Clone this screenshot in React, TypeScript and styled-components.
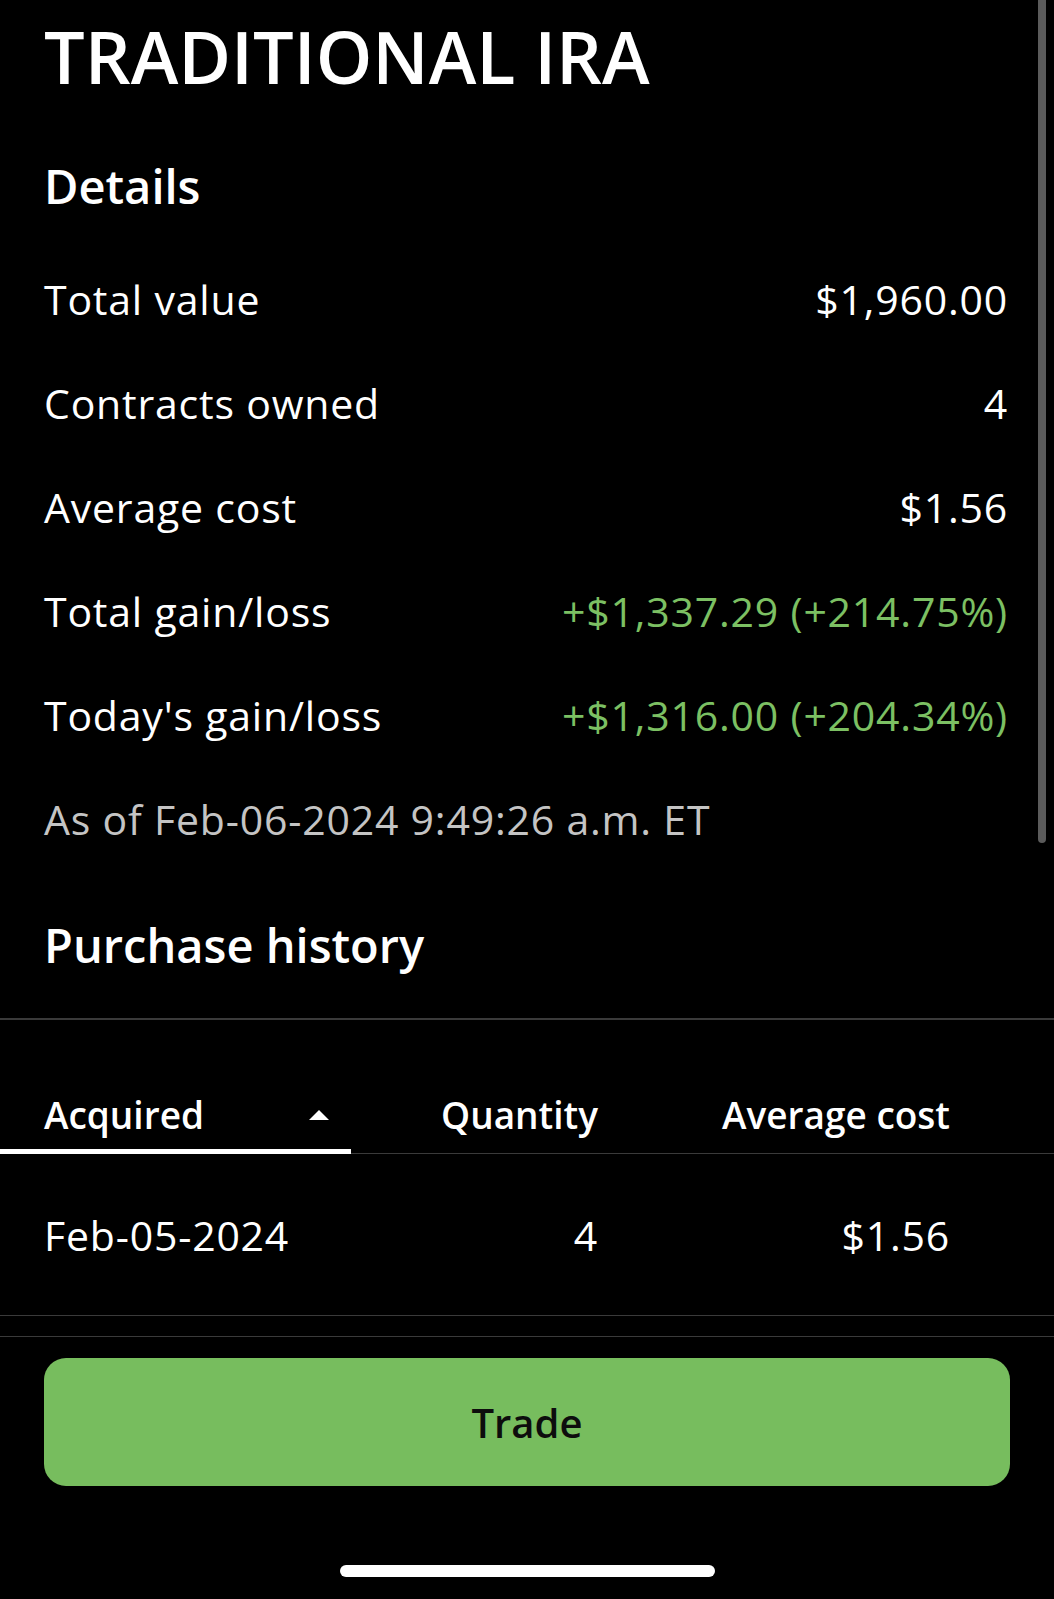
import React from 'react';
import styled, { createGlobalStyle } from 'styled-components';

const GlobalStyle = createGlobalStyle`
  html, body {
    margin: 0;
    padding: 0;
    background: #000;
  }
  body {
    font-family: "Open Sans", "Noto Sans", Arial, sans-serif;
    color: #fff;
    -webkit-font-smoothing: antialiased;
  }
`;

const Screen = styled.div`
  position: relative;
  width: 1054px;
  height: 1599px;
  background: #000;
  overflow: hidden;
  display: flex;
  flex-direction: column;
`;

const Scrollbar = styled.div`
  position: absolute;
  top: 0;
  right: 8px;
  width: 8px;
  height: 843px;
  border-radius: 0 0 4px 4px;
  background: #5b5b5b;
`;

const Title = styled.h1`
  margin: 0;
  height: 112px;
  padding: 0 44px;
  display: flex;
  align-items: center;
  font-size: 72px;
  font-weight: 600;
`;

const SectionHeading = styled.h2<{ $height: number; $top?: number; $divider?: boolean }>`
  margin: 0;
  box-sizing: border-box;
  height: ${p => p.$height}px;
  padding: ${p => p.$top ?? 0}px 44px 0;
  display: flex;
  align-items: center;
  font-size: 47px;
  font-weight: 600;
  border-bottom: ${p => (p.$divider ? '2px solid #3a3a3a' : 'none')};
`;

const DetailRow = styled.div`
  height: 104px;
  padding: 0 46px 0 44px;
  display: flex;
  align-items: center;
  justify-content: space-between;
  font-size: 41px;
  letter-spacing: 0.8px;
`;

const Value = styled.span<{ $gain?: boolean }>`
  color: ${p => (p.$gain ? '#7cc063' : '#fff')};
`;

const Timestamp = styled.div`
  height: 104px;
  padding: 0 44px;
  display: flex;
  align-items: center;
  font-size: 41px;
  letter-spacing: 0.8px;
  color: #c4c4c4;
`;

const TableRow = styled.div<{ $height: number }>`
  display: grid;
  grid-template-columns: 351px 247px 352px 1fr;
  height: ${p => p.$height}px;
  border-bottom: 1px solid #3a3a3a;
  box-sizing: border-box;
`;

const HeadCell = styled.div<{ $active?: boolean }>`
  box-sizing: border-box;
  display: flex;
  align-items: flex-end;
  justify-content: ${p => (p.$active ? 'space-between' : 'flex-end')};
  padding: 0 ${p => (p.$active ? '22px' : '0')} ${p => (p.$active ? '14px' : '18px')}
    ${p => (p.$active ? '44px' : '0')};
  font-size: 37px;
  font-weight: 600;
  line-height: 40px;
  border-bottom: ${p => (p.$active ? '5px solid #fff' : 'none')};
  margin-bottom: ${p => (p.$active ? '-1px' : '0')};
`;

const SortArrow = styled.svg`
  width: 20px;
  height: 10px;
  margin-bottom: 15px;
`;

const Cell = styled.div<{ $first?: boolean }>`
  display: flex;
  align-items: center;
  justify-content: ${p => (p.$first ? 'flex-start' : 'flex-end')};
  padding-left: ${p => (p.$first ? '44px' : '0')};
  font-size: 41px;
  letter-spacing: 0.8px;
`;

const Footer = styled.div`
  margin-top: 20px;
  border-top: 1px solid #3a3a3a;
  padding: 21px 44px 0;
  display: flex;
  flex-direction: column;
  align-items: center;
`;

const TradeButton = styled.button`
  width: 100%;
  height: 128px;
  border: none;
  border-radius: 22px;
  background: #77bd5e;
  color: #0d0d0d;
  font-family: inherit;
  font-size: 40px;
  font-weight: 600;
  cursor: pointer;
`;

const HomeIndicator = styled.div`
  margin-top: 79px;
  width: 375px;
  height: 12px;
  border-radius: 6px;
  background: #fff;
`;

const details = [
  { label: 'Total value', value: '$1,960.00' },
  { label: 'Contracts owned', value: '4' },
  { label: 'Average cost', value: '$1.56' },
  { label: 'Total gain/loss', value: '+$1,337.29 (+214.75%)', gain: true },
  { label: "Today's gain/loss", value: '+$1,316.00 (+204.34%)', gain: true },
];

export default function App() {
  return (
    <>
      <GlobalStyle />
      <Screen>
        <Scrollbar />
        <Title>TRADITIONAL IRA</Title>
        <SectionHeading $height={135} $top={13}>Details</SectionHeading>
        {details.map(d => (
          <DetailRow key={d.label}>
            <span>{d.label}</span>
            <Value $gain={d.gain}>{d.value}</Value>
          </DetailRow>
        ))}
        <Timestamp>As of Feb-06-2024 9:49:26 a.m. ET</Timestamp>
        <SectionHeading $height={149} $divider>Purchase history</SectionHeading>
        <TableRow $height={134}>
          <HeadCell $active>
            <span>Acquired</span>
            <SortArrow viewBox="0 0 20 10">
              <path d="M10 0 L20 10 L0 10 Z" fill="#fff" />
            </SortArrow>
          </HeadCell>
          <HeadCell>Quantity</HeadCell>
          <HeadCell>Average cost</HeadCell>
          <div />
        </TableRow>
        <TableRow $height={162}>
          <Cell $first>Feb-05-2024</Cell>
          <Cell>4</Cell>
          <Cell>$1.56</Cell>
          <div />
        </TableRow>
        <Footer>
          <TradeButton>Trade</TradeButton>
          <HomeIndicator />
        </Footer>
      </Screen>
    </>
  );
}
